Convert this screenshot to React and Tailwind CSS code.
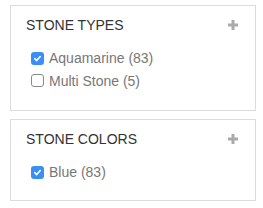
import React from "react";

function Check({ checked }) {
  if (checked) {
    return (
      <span className="flex h-[13px] w-[13px] shrink-0 items-center justify-center rounded-[3px] bg-[#3b8ef5]">
        <svg width="9" height="9" viewBox="0 0 10 10">
          <path d="M2 5.2 L4.1 7.3 L8 2.8" fill="none" stroke="#fff" strokeWidth="1.8" strokeLinecap="round" strokeLinejoin="round" />
        </svg>
      </span>
    );
  }
  return <span className="block h-[13px] w-[13px] shrink-0 rounded-[3px] border border-[#8a8a8a] bg-white" />;
}

function Plus() {
  return (
    <svg width="10" height="10" viewBox="0 0 10 10" className="shrink-0">
      <rect x="3.5" y="0" width="3" height="10" fill="#aaa" />
      <rect x="0" y="3.5" width="10" height="3" fill="#aaa" />
    </svg>
  );
}

function Card({ title, items, className }) {
  return (
    <div className={"border border-[#dcdcdc] bg-white pl-[15px] pr-[17px] pt-[10px] " + className}>
      <div className="flex items-center justify-between">
        <span className="text-[14px] leading-[18px] text-[#333]">{title}</span>
        <Plus />
      </div>
      <div className="mt-[13px] flex flex-col pl-[5px]">
        {items.map((it) => (
          <div key={it.label} className="flex h-[22.5px] items-center gap-[5px]">
            <Check checked={it.checked} />
            <span className="text-[14px] leading-[18px] text-[#777]">{it.label}</span>
          </div>
        ))}
      </div>
    </div>
  );
}

export default function App() {
  return (
    <div className="h-[208px] w-[263px] bg-white pl-[10px] pt-[5px]" style={{ fontFamily: '"Liberation Sans", Arial, sans-serif' }}>
      <div className="flex w-[246px] flex-col gap-[8px]">
        <Card
          title="STONE TYPES"
          className="h-[106px]"
          items={[
            { label: "Aquamarine (83)", checked: true },
            { label: "Multi Stone (5)", checked: false },
          ]}
        />
        <Card title="STONE COLORS" className="h-[82px]" items={[{ label: "Blue (83)", checked: true }]} />
      </div>
    </div>
  );
}
